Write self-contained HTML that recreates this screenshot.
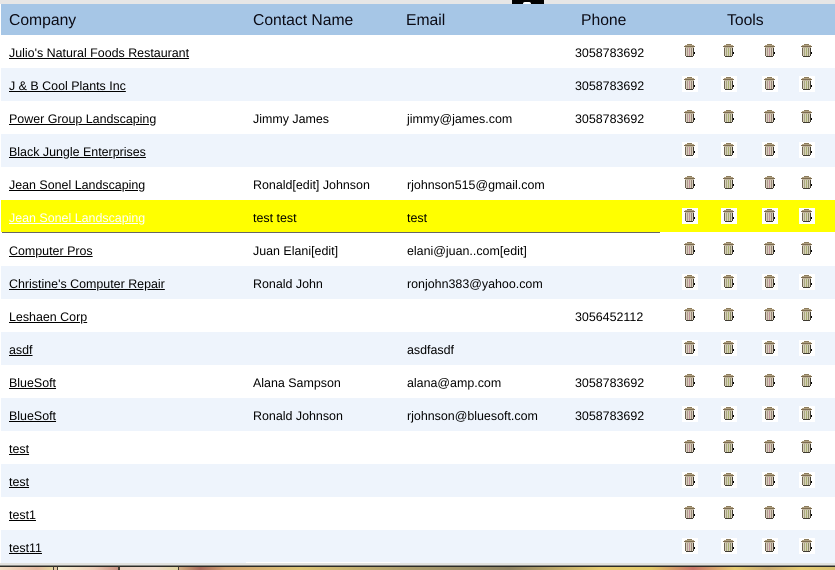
<!DOCTYPE html>
<html><head><meta charset="utf-8"><style>
html,body{margin:0;padding:0;width:835px;height:570px;overflow:hidden;background:#fff}
body{position:relative;font-family:"Liberation Sans",Arial,sans-serif;font-size:12.45px;color:#000;text-rendering:geometricPrecision}
.a{position:absolute}
.top{left:0;top:0;width:835px;height:4px;background:#e6e6e6}
.blk{left:512px;top:0;width:32px;height:4px;background:#000}
.bump{left:523px;top:2px;width:8px;height:2px;background:#fff;border-radius:4px 4px 0 0}
.hd{left:1px;top:4px;width:834px;height:31px;background:#a6c6e6}
.hd span{position:absolute;top:8px;font-size:15.7px;line-height:18px;color:#0a0a14}
.r{position:absolute;left:1px;width:834px;height:33px;background:#fff}
.r.o{background:#eef4fc}
.r.y{background:#ff0;height:32px}
.r span,.r a{position:absolute;top:11px;line-height:14px;white-space:nowrap}
.r a{left:8px;color:#000;text-decoration:underline}
.r.y a{color:#fff}
.c{left:252px}.e{left:406px}.p{left:574px}
.r svg{position:absolute;top:8px;width:16px;height:16px}
.o svg,.y svg{background:#fff}
.i1{left:681px}.i2{left:720px}.i3{left:761px}.i4{left:798px}
</style></head><body>
<svg width="0" height="0" style="position:absolute"><defs>
<g id="base" shape-rendering="crispEdges">
<rect x="5" y="1" width="5" height="1" fill="#8c7c5c"/>
<rect x="3" y="2" width="9" height="1" fill="#b0a080"/>
<rect x="2" y="3" width="11" height="1" fill="#7c6c50"/>
<rect x="3" y="4" width="9" height="1" fill="#c0b49c"/>
<rect x="3" y="5" width="1" height="8" fill="#6c6250"/>
<rect x="11" y="5" width="1" height="8" fill="#3e3a30"/>
<rect x="4" y="13" width="7" height="1" fill="#3e3a30"/>
<rect x="4" y="5" width="7" height="8" fill="#d8d0bc"/>
<rect x="12" y="9" width="1" height="2" fill="#000"/>
</g>
<g id="a"><use href="#base"/><g shape-rendering="crispEdges"><rect x="5" y="5" width="1" height="8" fill="#b09890"/><rect x="7" y="5" width="1" height="8" fill="#c0949c"/><rect x="9" y="5" width="1" height="8" fill="#988478"/></g></g>
<g id="b"><use href="#base"/><g shape-rendering="crispEdges"><rect x="5" y="5" width="1" height="8" fill="#a8a880"/><rect x="7" y="5" width="1" height="8" fill="#a8b070"/><rect x="9" y="5" width="1" height="8" fill="#8c8c68"/></g></g>
</defs></svg>
<div class="a top"></div><div class="a blk"></div><div class="a bump"></div>
<div class="a hd"><span style="left:8px">Company</span><span style="left:252px">Contact Name</span><span style="left:405px">Email</span><span style="left:580px">Phone</span><span style="left:726px">Tools</span></div>

<div class="r" style="top:35px"><a>Julio's Natural Foods Restaurant</a><span class="p">3058783692</span><svg class="i1"><use href="#a"/></svg><svg class="i2"><use href="#b"/></svg><svg class="i3"><use href="#a"/></svg><svg class="i4"><use href="#b"/></svg></div>
<div class="r o" style="top:68px"><a>J &amp; B Cool Plants Inc</a><span class="p">3058783692</span><svg class="i1"><use href="#a"/></svg><svg class="i2"><use href="#b"/></svg><svg class="i3"><use href="#a"/></svg><svg class="i4"><use href="#b"/></svg></div>
<div class="r" style="top:101px"><a>Power Group Landscaping</a><span class="c">Jimmy James</span><span class="e">jimmy@james.com</span><span class="p">3058783692</span><svg class="i1"><use href="#a"/></svg><svg class="i2"><use href="#b"/></svg><svg class="i3"><use href="#a"/></svg><svg class="i4"><use href="#b"/></svg></div>
<div class="r o" style="top:134px"><a>Black Jungle Enterprises</a><svg class="i1"><use href="#a"/></svg><svg class="i2"><use href="#b"/></svg><svg class="i3"><use href="#a"/></svg><svg class="i4"><use href="#b"/></svg></div>
<div class="r" style="top:167px"><a>Jean Sonel Landscaping</a><span class="c">Ronald[edit] Johnson</span><span class="e">rjohnson515@gmail.com</span><svg class="i1"><use href="#a"/></svg><svg class="i2"><use href="#b"/></svg><svg class="i3"><use href="#a"/></svg><svg class="i4"><use href="#b"/></svg></div>
<div class="r y" style="top:200px"><a>Jean Sonel Landscaping</a><span class="c">test test</span><span class="e">test</span><svg class="i1"><use href="#a"/></svg><svg class="i2"><use href="#b"/></svg><svg class="i3"><use href="#a"/></svg><svg class="i4"><use href="#b"/></svg></div>
<div class="a" style="left:2px;top:232px;width:658px;height:1px;background:#666"></div>
<div class="r" style="top:233px"><a>Computer Pros</a><span class="c">Juan Elani[edit]</span><span class="e">elani@juan..com[edit]</span><svg class="i1"><use href="#a"/></svg><svg class="i2"><use href="#b"/></svg><svg class="i3"><use href="#a"/></svg><svg class="i4"><use href="#b"/></svg></div>
<div class="r o" style="top:266px"><a>Christine's Computer Repair</a><span class="c">Ronald John</span><span class="e">ronjohn383@yahoo.com</span><svg class="i1"><use href="#a"/></svg><svg class="i2"><use href="#b"/></svg><svg class="i3"><use href="#a"/></svg><svg class="i4"><use href="#b"/></svg></div>
<div class="r" style="top:299px"><a>Leshaen Corp</a><span class="p">3056452112</span><svg class="i1"><use href="#a"/></svg><svg class="i2"><use href="#b"/></svg><svg class="i3"><use href="#a"/></svg><svg class="i4"><use href="#b"/></svg></div>
<div class="r o" style="top:332px"><a>asdf</a><span class="e">asdfasdf</span><svg class="i1"><use href="#a"/></svg><svg class="i2"><use href="#b"/></svg><svg class="i3"><use href="#a"/></svg><svg class="i4"><use href="#b"/></svg></div>
<div class="r" style="top:365px"><a>BlueSoft</a><span class="c">Alana Sampson</span><span class="e">alana@amp.com</span><span class="p">3058783692</span><svg class="i1"><use href="#a"/></svg><svg class="i2"><use href="#b"/></svg><svg class="i3"><use href="#a"/></svg><svg class="i4"><use href="#b"/></svg></div>
<div class="r o" style="top:398px"><a>BlueSoft</a><span class="c">Ronald Johnson</span><span class="e">rjohnson@bluesoft.com</span><span class="p">3058783692</span><svg class="i1"><use href="#a"/></svg><svg class="i2"><use href="#b"/></svg><svg class="i3"><use href="#a"/></svg><svg class="i4"><use href="#b"/></svg></div>
<div class="r" style="top:431px"><a>test</a><svg class="i1"><use href="#a"/></svg><svg class="i2"><use href="#b"/></svg><svg class="i3"><use href="#a"/></svg><svg class="i4"><use href="#b"/></svg></div>
<div class="r o" style="top:464px"><a>test</a><svg class="i1"><use href="#a"/></svg><svg class="i2"><use href="#b"/></svg><svg class="i3"><use href="#a"/></svg><svg class="i4"><use href="#b"/></svg></div>
<div class="r" style="top:497px"><a>test1</a><svg class="i1"><use href="#a"/></svg><svg class="i2"><use href="#b"/></svg><svg class="i3"><use href="#a"/></svg><svg class="i4"><use href="#b"/></svg></div>
<div class="r o" style="top:530px"><a>test11</a><svg class="i1"><use href="#a"/></svg><svg class="i2"><use href="#b"/></svg><svg class="i3"><use href="#a"/></svg><svg class="i4"><use href="#b"/></svg></div>

<div class="a" style="left:246px;top:562px;width:154px;height:1px;background:#fff"></div>
<div class="a" style="left:0;top:563px;width:835px;height:2px;background:#e2e2de"></div>
<div class="a" style="left:0;top:565px;width:835px;height:1px;background:#8a8a86"></div>
<div class="a" style="left:0;top:566px;width:835px;height:1px;background:#2c2c28"></div>
<div class="a" style="left:0;top:567px;width:835px;height:3px;background:linear-gradient(90deg,#e0c8a0 0,#e8c8b0 20%,#c9a078 22%,#a86a5a 24%,#d0a070 27%,#dcc474 36%,#a89a6c 50%,#8e8262 61%,#b8a468 66%,#e6cc70 72%,#e2c868 78%,#c87468 83%,#e6cc70 88%,#c8a870 92%,#e6cc70 96%,#d8c070 100%)"></div>
<div class="a" style="left:0;top:566px;width:54px;height:4px;background:linear-gradient(90deg,#f4e0c8,#e4b8a0 70%,#e4d8a0);border-right:1px solid #443c30;border-top:1px solid #2c2c28;box-sizing:border-box"></div>
<div class="a" style="left:57px;top:566px;width:62px;height:4px;background:linear-gradient(90deg,#f6eed0,#eccab4 60%,#c89080);border-right:1px solid #443c30;border-left:1px solid #443c30;border-top:1px solid #2c2c28;box-sizing:border-box"></div>
<div class="a" style="left:119px;top:566px;width:60px;height:4px;background:linear-gradient(90deg,#eed0c0,#eed8c8 60%,#e0d4a0);border-right:1px solid #443c30;border-left:1px solid #443c30;border-top:1px solid #2c2c28;box-sizing:border-box"></div>
</body></html>
